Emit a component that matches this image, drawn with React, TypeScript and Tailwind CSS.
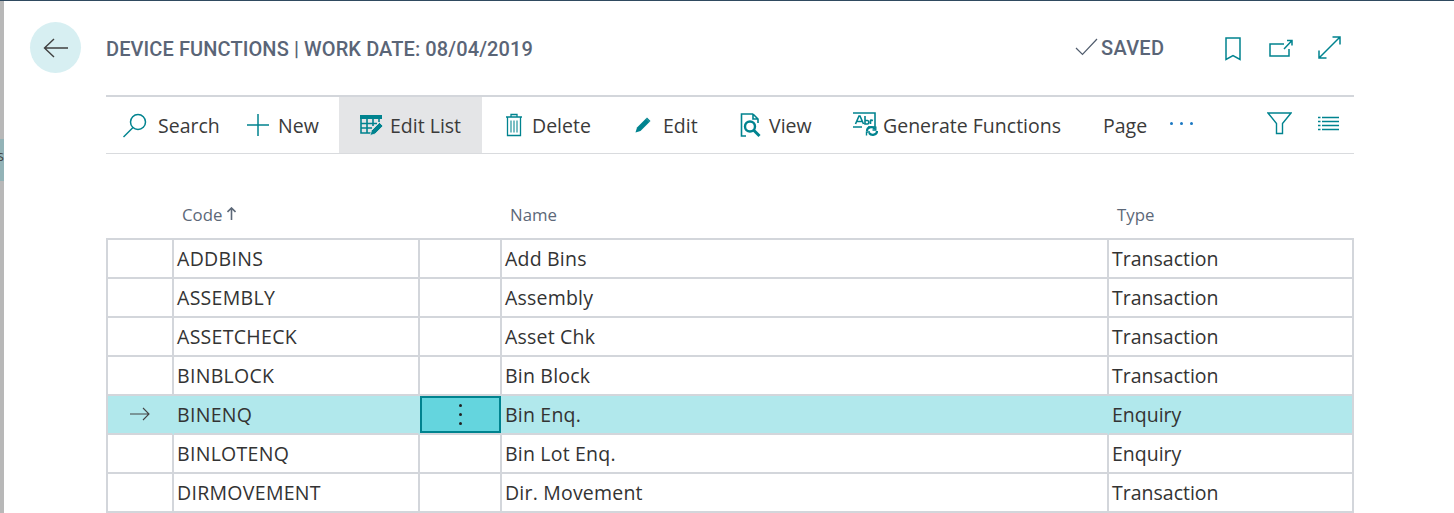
import React from "react";

const teal = "#00838f";

const rows = [
  ["ADDBINS", "Add Bins", "Transaction"],
  ["ASSEMBLY", "Assembly", "Transaction"],
  ["ASSETCHECK", "Asset Chk", "Transaction"],
  ["BINBLOCK", "Bin Block", "Transaction"],
  ["BINENQ", "Bin Enq.", "Enquiry"],
  ["BINLOTENQ", "Bin Lot Enq.", "Enquiry"],
  ["DIRMOVEMENT", "Dir. Movement", "Transaction"],
];

const cols = "grid grid-cols-[66px_246px_82px_607px_245px]";

function ToolItem({ icon, label, className }: { icon: React.ReactNode; label: string; className: string }) {
  return (
    <div className={`flex items-center h-full shrink-0 ${className}`}>
      {icon}
      <span>{label}</span>
    </div>
  );
}

export default function App() {
  return (
    <div className="flex h-[513px] w-full overflow-hidden bg-white border-t border-[#2f4a60] font-['Open_Sans','Noto_Sans',sans-serif] text-[#333]">
      <div className="w-[4px] shrink-0 flex flex-col">
        <div className="h-[138px] bg-[#b8b8b8]" />
        <div className="h-[42px] bg-[#93b3b7] overflow-hidden relative">
          <span className="absolute right-0 top-[10px] text-[14px] leading-none text-[#444]">s</span>
        </div>
        <div className="flex-1 bg-[#b8b8b8]" />
      </div>
      <div className="flex-1 pl-[26px] pr-[100px]">
        <div className="flex h-[94px] pt-[21px]">
          <div className="w-[51px] h-[51px] rounded-full bg-[#d7eff2] flex items-center justify-center shrink-0">
            <svg width="26" height="20" viewBox="0 0 26 20" fill="none" stroke="#404040" strokeWidth="1.4">
              <path d="M1.5 10H25M11 1L1.5 10L11 19" />
            </svg>
          </div>
          <div className="ml-[25px] w-[968px] shrink-0 h-[51px] pt-[2px] flex items-center font-['Roboto',sans-serif] text-[20px] font-medium tracking-[0.1px] text-[#5a6577]">
            DEVICE FUNCTIONS | WORK DATE: 08/04/2019
          </div>
          <div className="h-[51px] pt-[1px] flex items-center text-[#5a6577] font-['Roboto',sans-serif] text-[20px] font-medium tracking-[0.3px]">
            <svg width="23" height="18" viewBox="0 0 23 18" fill="none" stroke="#505c6d" strokeWidth="1.2" className="mr-[3px] ml-[1px] -mt-[2px]">
              <path d="M1 10L7.5 16.5L22 1" />
            </svg>
            SAVED
          </div>
          <div className="h-[51px] flex items-center ml-[61px]">
            <svg width="16" height="24" viewBox="0 0 16 24" fill="none" stroke={teal} strokeWidth="1.5" className="mt-[2px] mr-[28px]">
              <path d="M1 1H15V22.5L8 18.5L1 22.5Z" />
            </svg>
            <svg width="24" height="18" viewBox="0 0 24 18" fill="none" stroke={teal} strokeWidth="1.5" className="mr-[25px]">
              <path d="M15 5H1V17H20V10M15 10L23 1.5M18 1.5H23V6.5" />
            </svg>
            <svg width="23" height="23" viewBox="0 0 23 23" fill="none" stroke={teal} strokeWidth="1.5">
              <path d="M1 22L22 1M14.5 1H22V8.5M1 14.5V22H8.5" />
            </svg>
          </div>
        </div>

        <div className="w-[1248px] ml-[76px] h-[59px] border-t-2 border-b border-t-[#d3d6db] border-b-[#d9dbde] flex items-stretch text-[19.5px] leading-none text-[#3a3a3a]">
          <ToolItem
            className="w-[140px] pl-[16px] pt-[2px]"
            label="Search"
            icon={
              <svg width="26" height="26" viewBox="0 0 26 26" fill="none" stroke={teal} strokeWidth="1.5" className="mr-[10px] -mt-[2px]">
                <circle cx="16" cy="10" r="7.5" />
                <path d="M11 15.5L1.5 25" />
              </svg>
            }
          />
          <ToolItem
            className="w-[93px] pt-[2px]"
            label="New"
            icon={
              <svg width="24" height="24" viewBox="0 0 24 24" fill="none" stroke={teal} strokeWidth="1.5" className="mr-[8px] -mt-[2px]">
                <path d="M12 1V23M1 12H23" />
              </svg>
            }
          />
          <ToolItem
            className="w-[143px] pl-[21px] pt-[2px] bg-[#e4e5e7]"
            label="Edit List"
            icon={
              <svg width="24" height="21" viewBox="0 0 24 21" fill="none" className="mr-[6px] -mt-[2px]">
                <path d="M0 0H22V4H0Z" fill={teal} />
                <path d="M1 4V18H12M1 8.5H17M1 13H12M7 4V18M13 4V11M19 4V7" stroke={teal} strokeWidth="1.6" />
                <path d="M10 20.5L11.5 15.5L19.5 7.5L23 11L15 19Z" fill={teal} stroke="#e4e5e7" strokeWidth="0.8" />
              </svg>
            }
          />
          <ToolItem
            className="w-[153px] pl-[23px] pt-[2px]"
            label="Delete"
            icon={
              <svg width="18" height="24" viewBox="0 0 18 24" fill="none" stroke={teal} strokeWidth="1.3" className="mr-[9px] -mt-[2px]">
                <path d="M1 4H17M6 4V1.5H12V4M2.5 4V22.5H15.5V4" />
                <path d="M6 7.5V19.5M9 7.5V19.5M12 7.5V19.5" strokeWidth="1.5" opacity="0.7" />
              </svg>
            }
          />
          <ToolItem
            className="w-[105px] pt-[2px]"
            label="Edit"
            icon={
              <svg width="16" height="16" viewBox="0 0 16 16" className="mr-[12px] -mt-[2px]">
                <path d="M0.5 15.5L2 10.5L11 1.5L14.5 5L5.5 14Z" fill={teal} />
                <path d="M12 0.5L15.5 4L14.5 5L11 1.5Z" fill={teal} />
              </svg>
            }
          />
          <ToolItem
            className="w-[112px] pt-[2px]"
            label="View"
            icon={
              <svg width="22" height="25" viewBox="0 0 22 25" fill="none" stroke={teal} strokeWidth="1.6" className="mr-[7px] -mt-[2px]">
                <path d="M13 1H1.5V23H6M13 1L18 6V10M13 1V6H18" />
                <circle cx="10" cy="13.5" r="5" strokeWidth="2.4" />
                <path d="M13.5 17L19.5 23" strokeWidth="3" />
              </svg>
            }
          />
          <ToolItem
            className="w-[251px] pt-[2px]"
            label="Generate Functions"
            icon={
              <svg width="26" height="24" viewBox="0 0 26 24" fill="none" className="mr-[5px] -mt-[4px]">
                <path d="M1 1H23V15H16M10 15H1Z" stroke={teal} strokeWidth="1.6" fill="none" />
                <path d="M3.5 12L7 4H8L11.5 12M5 9.5H10M13 4V12H15.5C17.2 12 17.2 8.5 15.5 8.5H13M18.5 12V8.5C18.5 8 19.5 8 21 8.5" stroke={teal} strokeWidth="1.6" />
                <path d="M15 19C15 15 20 14 23 17M25 19C25 23 19.5 24 17 21" stroke={teal} strokeWidth="2.2" />
                <path d="M23.8 14.5V18H20.5M14.5 23.5V20H18" stroke={teal} strokeWidth="1.4" />
              </svg>
            }
          />
          <div className="w-[67px] flex items-center shrink-0 pt-[2px]">Page</div>
          <div className="w-[97px] shrink-0 flex items-center pb-[4px] gap-[7px]">
            <span className="w-[3px] h-[3px] rounded-full bg-[#1b78c2]" />
            <span className="w-[3px] h-[3px] rounded-full bg-[#1b78c2]" />
            <span className="w-[3px] h-[3px] rounded-full bg-[#1b78c2]" />
          </div>
          <div className="flex items-center pb-[3px] gap-[26px]">
            <svg width="25" height="23" viewBox="0 0 25 23" fill="none" stroke={teal} strokeWidth="1.4">
              <path d="M1 1H24L15.5 11.5V21.5H9.5V11.5Z" />
            </svg>
            <svg width="21" height="16" viewBox="0 0 21 16" fill="none" stroke={teal} strokeWidth="1.5">
              <path d="M0 1.5H2.5M4 1.5H21M0 5.5H2.5M4 5.5H21M0 9.5H2.5M4 9.5H21M0 13.5H2.5M4 13.5H21" />
            </svg>
          </div>
        </div>

        <div className="w-[1248px] ml-[76px]">
          <div className={`${cols} h-[84px] pb-[12px] items-end text-[16.8px] text-[#5c6878] leading-[22px]`}>
            <div />
            <div className="col-span-2 pl-[10px] flex items-center gap-[5px]">
              Code
              <svg width="9" height="13" viewBox="0 0 9 13" fill="none" stroke="#5c6878" strokeWidth="1.6" className="-mt-[3px]">
                <path d="M4.5 13V1.5M0.5 5L4.5 1L8.5 5" />
              </svg>
            </div>
            <div className="pl-[10px]">Name</div>
            <div className="pl-[10px]">Type</div>
          </div>
          <div className="border-t-2 border-l-2 border-[#d3d6db] text-[19.5px] text-[#333]">
            {rows.map((r, i) => {
              const sel = i === 4;
              const cell = `h-[39px] border-b-2 border-b-[#d3d6db] flex items-center pt-[1px] ${sel ? "bg-[#b1e8ec]" : ""}`;
              const rule = sel ? "border-r-2 border-r-[#b1e8ec]" : "border-r-2 border-r-[#d3d6db]";
              return (
                <div key={r[0]} className={cols}>
                  <div className={`${cell} ${rule} justify-center`}>
                    {sel && (
                      <svg width="20" height="14" viewBox="0 0 20 14" fill="none" stroke="#444" strokeWidth="1.1" className="-mt-[3px]">
                        <path d="M0 7H19M13 1L19 7L13 13" />
                      </svg>
                    )}
                  </div>
                  <div className={`${cell} ${rule} pl-[3px] tracking-[0.3px]`}>{r[0]}</div>
                  {sel ? (
                    <div className="h-[39px] border-b-2 border-b-[#d3d6db] pr-[1px] bg-[#b1e8ec]">
                      <div className="h-full border-2 border-[#00838f] bg-[#64d5de] flex flex-col items-center justify-center gap-[6px]">
                        <span className="w-[3px] h-[3px] rounded-full bg-[#222]" />
                        <span className="w-[3px] h-[3px] rounded-full bg-[#222]" />
                        <span className="w-[3px] h-[3px] rounded-full bg-[#222]" />
                      </div>
                    </div>
                  ) : (
                    <div className={`${cell} ${rule}`} />
                  )}
                  <div className={`${cell} ${rule} pl-[3px] tracking-[0.2px]`}>{r[1]}</div>
                  <div className={`${cell} border-r-2 border-r-[#d3d6db] pl-[3px]`}>{r[2]}</div>
                </div>
              );
            })}
          </div>
        </div>
      </div>
    </div>
  );
}
